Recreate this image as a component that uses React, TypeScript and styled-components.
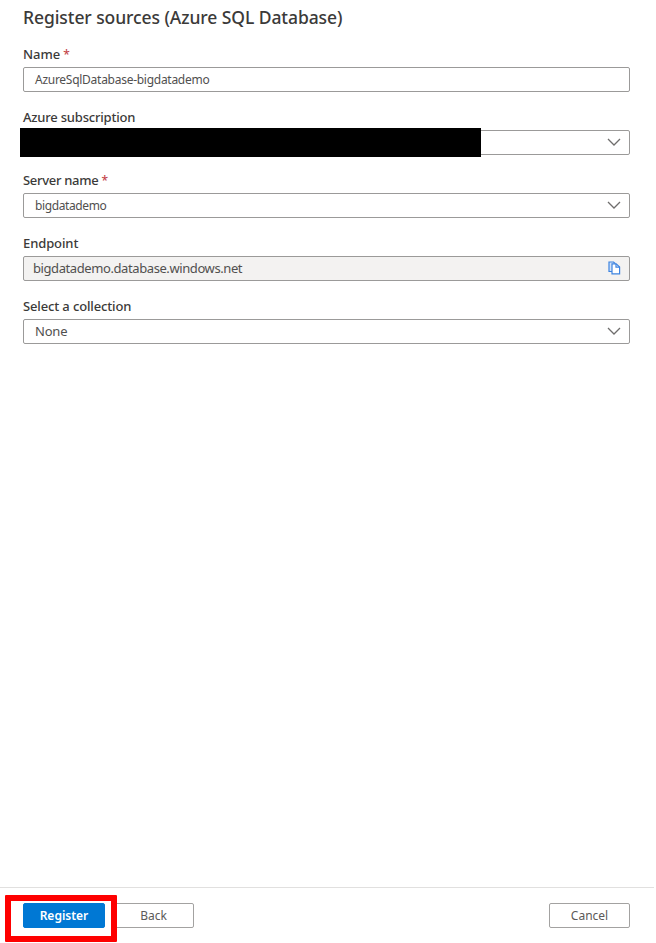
import React from 'react';
import styled, { createGlobalStyle } from 'styled-components';

const GlobalStyle = createGlobalStyle`
  *,
  *::after {
    box-sizing: border-box;
  }

  body {
    margin: 0;
    background: #fff;
    font-family: 'Segoe UI', 'Noto Sans', 'Open Sans', sans-serif;
    color: #3b3a39;
  }
`;

const Panel = styled.div`
  display: flex;
  flex-direction: column;
  width: 654px;
  height: 943px;
`;

const Title = styled.h1`
  margin: 0;
  padding: 4px 23px 0;
  height: 41px;
  font-size: 17.5px;
  font-weight: 500;
  line-height: 26px;
  letter-spacing: -0.08px;
  white-space: nowrap;
`;

const Form = styled.form`
  display: flex;
  flex-direction: column;
  flex: 1;
  gap: 12px;
  padding: 0 24px 0 23px;
`;

const Field = styled.div`
  display: flex;
  flex-direction: column;
`;

const Label = styled.label<{ $spacing?: number }>`
  height: 26px;
  font-size: 13px;
  font-weight: 500;
  line-height: 26px;
  letter-spacing: ${props => props.$spacing || 0}px;
  white-space: nowrap;
`;

const Required = styled.span`
  margin-left: 3px;
  font-size: 12px;
  color: #c4464c;
`;

const Control = styled.div<{ $readOnly?: boolean }>`
  position: relative;
  display: flex;
  align-items: center;
  justify-content: space-between;
  height: 25px;
  padding: 0 8px 1px ${props => (props.$readOnly ? 9 : 11)}px;
  border: 1px solid #9b9a99;
  border-radius: 2px;
  background: ${props => (props.$readOnly ? '#f3f2f1' : '#fff')};
`;

const Value = styled.span<{ $small?: boolean; $spacing?: number }>`
  padding-top: ${props => (props.$small ? 2 : 0)}px;
  font-size: ${props => (props.$small ? 12 : 13)}px;
  line-height: 22px;
  letter-spacing: ${props => props.$spacing || 0}px;
  color: #51504f;
  white-space: nowrap;
`;

// Covers the subscription id
const Redaction = styled.div`
  position: absolute;
  top: -3px;
  left: -4px;
  width: 461px;
  height: 29px;
  background: #000;
`;

const Footer = styled.footer`
  display: flex;
  align-items: flex-start;
  gap: 8px;
  height: 56px;
  padding: 15px 24px 0 23px;
  border-top: 1px solid #e1e0df;
`;

const Button = styled.button<{ $primary?: boolean }>`
  width: ${props => (props.$primary ? 82 : 81)}px;
  height: 25px;
  padding: 0;
  border: 1px solid ${props => (props.$primary ? '#0078d4' : '#a3a2a1')};
  border-radius: 2px;
  background: ${props => (props.$primary ? '#0078d4' : '#fff')};
  color: ${props => (props.$primary ? '#fff' : '#5b5a59')};
  font-family: inherit;
  font-size: 12px;
  font-weight: ${props => (props.$primary ? 600 : 400)};
  line-height: 22px;
`;

const Highlight = styled.div`
  position: relative;
  display: flex;

  &::after {
    content: '';
    position: absolute;
    z-index: 1;
    top: -8px;
    left: -18px;
    width: 112px;
    height: 47px;
    border: 6px solid #fe0000;
    border-radius: 1px;
  }
`;

const Spacer = styled.div`
  flex: 1;
`;

const ChevronIcon = () => (
  <svg width="14" height="8" viewBox="0 0 14 8" fill="none">
    <path d="M1 1L7 7L13 1" stroke="#6f6e6d" strokeWidth="1.3" />
  </svg>
);

const CopyIcon = () => (
  <svg width="13" height="14" viewBox="0 0 13 14" fill="none" stroke="#3c83e0" strokeWidth="1.2">
    <path d="M4 10.5H1V1H5.5L7.5 2.8" fill="#d3e3f8" />
    <path d="M4 2.8H8.2L11.6 6V12.8H4Z" fill="#fff" />
    <path d="M8 3V6.2H11.6" />
  </svg>
);

const App: React.FC = () => {
  return (
    <>
      <GlobalStyle />
      <Panel>
        <Title>Register sources (Azure SQL Database)</Title>
        <Form>
          <Field>
            <Label>Name<Required>*</Required></Label>
            <Control>
              <Value $small $spacing={-0.27}>AzureSqlDatabase-bigdatademo</Value>
            </Control>
          </Field>
          <Field>
            <Label $spacing={-0.2}>Azure subscription</Label>
            <Control>
              <Spacer />
              <ChevronIcon />
              <Redaction />
            </Control>
          </Field>
          <Field>
            <Label $spacing={-0.3}>Server name<Required>*</Required></Label>
            <Control>
              <Value $small $spacing={-0.38}>bigdatademo</Value>
              <ChevronIcon />
            </Control>
          </Field>
          <Field>
            <Label $spacing={-0.1}>Endpoint</Label>
            <Control $readOnly>
              <Value $spacing={-0.41}>bigdatademo.database.windows.net</Value>
              <CopyIcon />
            </Control>
          </Field>
          <Field>
            <Label $spacing={-0.14}>Select a collection</Label>
            <Control>
              <Value $spacing={-0.2}>None</Value>
              <ChevronIcon />
            </Control>
          </Field>
        </Form>
        <Footer>
          <Highlight>
            <Button $primary>Register</Button>
          </Highlight>
          <Button>Back</Button>
          <Spacer />
          <Button>Cancel</Button>
        </Footer>
      </Panel>
    </>
  );
};

export default App;
